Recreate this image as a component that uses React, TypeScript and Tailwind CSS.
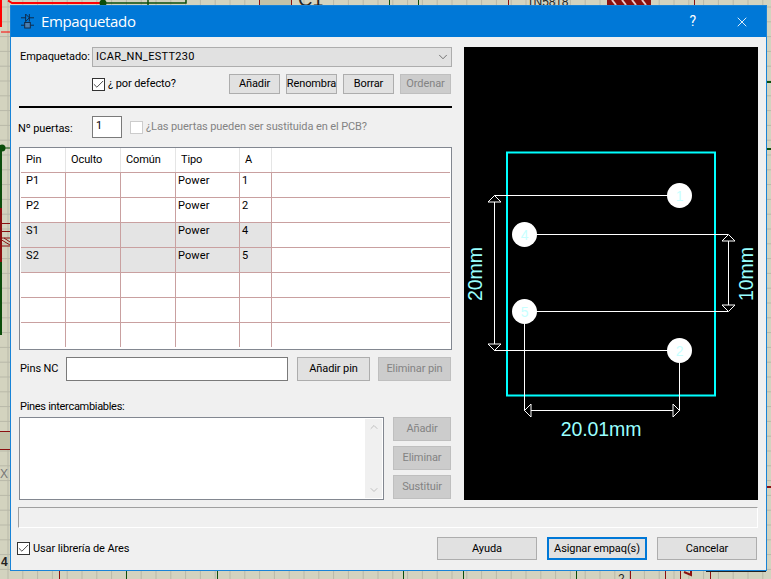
import { Check, ChevronDown, ChevronUp, X } from "lucide-react";

const columns = ["Pin", "Oculto", "Común", "Tipo", "A"];
const widths = ["w-[45px]", "w-[55px]", "w-[55px]", "w-[64px]", "w-[32px]"];

const rows = [
  { pin: "P1", tipo: "Power", a: "1", shaded: false },
  { pin: "P2", tipo: "Power", a: "2", shaded: false },
  { pin: "S1", tipo: "Power", a: "4", shaded: true },
  { pin: "S2", tipo: "Power", a: "5", shaded: true },
  { pin: "", tipo: "", a: "", shaded: false },
  { pin: "", tipo: "", a: "", shaded: false },
  { pin: "", tipo: "", a: "", shaded: false },
];

const Btn = ({ label, className = "", disabled = false }: { label: string; className?: string; disabled?: boolean }) => (
  <div
    className={`flex items-center justify-center overflow-hidden whitespace-nowrap border pt-[1px] ${
      disabled ? "bg-[#cccccc] border-[#bfbfbf] text-[#838383]" : "bg-[#e1e1e1] border-[#adadad] text-black"
    } ${className}`}
  >
    {label}
  </div>
);

const CheckBox = ({ checked = true, disabled = false }: { checked?: boolean; disabled?: boolean }) => (
  <div
    className={`flex h-[13px] w-[13px] shrink-0 items-center justify-center border bg-white ${
      disabled ? "border-[#cccccc]" : "border-[#333333]"
    }`}
  >
    {checked && <Check size={13} strokeWidth={1.6} className="shrink-0 text-[#333333]" />}
  </div>
);

// schematic sheet showing behind the dialog
const Sheet = () => (
  <svg className="absolute inset-0" width="771" height="579">
    <rect width="771" height="579" fill="#d3d3bf" />
    {Array.from({ length: 52 }).map((_, i) => (
      <line key={i} x1={8 + i * 14.8} y1="0" x2={8 + i * 14.8} y2="579" stroke="#b9b9a9" />
    ))}
    {Array.from({ length: 39 }).map((_, i) => (
      <line key={i} x1="0" y1={7 + i * 14.8} x2="771" y2={7 + i * 14.8} stroke="#b9b9a9" />
    ))}
    <path d="M1 0V27M8 0.5L12 3H103" stroke="#ff0000" strokeWidth="2" fill="none" />
    <path d="M1 32H10" stroke="#ff0000" fill="none" />
    <path d="M103 3H186V0M148 0V5" stroke="#0b4d0b" strokeWidth="1.5" fill="none" />
    <circle cx="103" cy="3" r="3.5" fill="#0b4d0b" />
    <rect x="259" y="0" width="33" height="5" fill="#c2c2a8" />
    <path d="M259.5 0V5M291.5 0V5M508.5 0V5M694.5 0V5" stroke="#8b1010" />
    <path d="M389.5 0V5M418.5 0V5" stroke="#0b4d0b" />
    <path d="M1 150V335" stroke="#0b4d0b" strokeWidth="2" />
    <circle cx="2" cy="148" r="3.5" fill="#0b4d0b" />
    <path d="M2 148H10" stroke="#0b4d0b" />
    <path d="M1 208V262" stroke="#8b1010" strokeWidth="2" />
    <path d="M0 223.5H10M0 231.5H10M0 238H10M0 246H10M0 431.5H10M0 449.5H10" stroke="#8b1010" />
    <path d="M0 239L10 245M4 238L10 242" stroke="#8b1010" />
    <rect x="0" y="432" width="10" height="17" fill="#c2c2a8" />
    <path d="M59.5 571V579M630.5 571V579M665.5 571V579M680.5 571V579M710.5 571V579" stroke="#8b1010" />
    <path d="M126.5 571V579M217.5 571V579M403.5 571V579M463.5 571V579M576.5 571V579" stroke="#0b4d0b" />
    <path d="M767 82H771M767 149H771" stroke="#0b4d0b" strokeWidth="2" />
    <path d="M767 487H771" stroke="#8b1010" strokeWidth="2" />
    <path d="M684 572L691 575V571" stroke="#8b1010" strokeWidth="2" fill="none" />
    <text x="298" y="6" fontFamily="Liberation Sans, sans-serif" fontSize="20" fill="#222222">C1</text>
    <text x="527" y="6" fontFamily="Liberation Sans, sans-serif" fontSize="12" fill="#222222">1N5818</text>
    <text x="618" y="583" fontFamily="Liberation Sans, sans-serif" fontSize="12" fill="#222222">2</text>
    <text x="0" y="478" fontFamily="Liberation Sans, sans-serif" fontSize="12" fill="#777777">X</text>
    <text x="1" y="566" fontFamily="Liberation Sans, sans-serif" fontSize="12" fontWeight="700" fill="#222222">4</text>
    <rect x="706" y="567" width="60" height="5" fill="#222222" />
    <path d="M607 0H651V5H607Z" fill="#8b1010" />
    <path d="M612 0L616 5M622 0L626 5M632 0L636 5M642 0L646 5" stroke="#e8c8c8" strokeWidth="2" />
  </svg>
);

const PadLabel = ({ x, y, n }: { x: number; y: number; n: string }) => (
  <>
    <circle cx={x} cy={y} r="12.5" fill="#ffffff" />
    <text x={x} y={y + 5} textAnchor="middle" fontFamily="Liberation Sans, sans-serif" fontSize="14" fill="#c8ffff">
      {n}
    </text>
  </>
);

// footprint preview with the pads and dimension arrows
const Preview = () => (
  <svg width="294" height="453" viewBox="464 47 294 453" className="block">
    <rect x="464" y="47" width="294" height="453" fill="#000000" />
    <rect x="507" y="152.5" width="208" height="243" fill="none" stroke="#00ffff" strokeWidth="2" />
    <g stroke="#ffffff" fill="none" shapeRendering="crispEdges">
      <path d="M494 195.5H680M494 350.5H680M524 234.5H728M524 311.5H728" />
      <path d="M494.5 196V350M728.5 235V311M524.5 311V411M679.5 350V411M525 410.5H679" />
    </g>
    <g stroke="#ffffff" fill="#000000">
      <path d="M494.5 195.5L488 202H501Z" />
      <path d="M494.5 350.5L488 344H501Z" />
      <path d="M728.5 234.5L722 241H735Z" />
      <path d="M728.5 311.5L722 305H735Z" />
      <path d="M524.5 410.5L531 404V417Z" />
      <path d="M679.5 410.5L673 404V417Z" />
    </g>
    <PadLabel x={679.5} y={195.5} n="1" />
    <PadLabel x={524.5} y={234.5} n="4" />
    <PadLabel x={524.5} y={311.5} n="5" />
    <PadLabel x={679.5} y={350.5} n="2" />
    <g fontFamily="Liberation Sans, sans-serif" fontSize="19.5" fill="#99ffff" textAnchor="middle">
      <text x="601" y="436">20.01mm</text>
      <text transform="translate(482 274) rotate(-90)">20mm</text>
      <text transform="translate(753 274) rotate(-90)">10mm</text>
    </g>
  </svg>
);

export default function App() {
  return (
    <div className="relative h-[579px] w-[771px] overflow-hidden font-['Roboto',sans-serif] text-[11px] tracking-[-0.1px] text-black">
      <Sheet />

      {/* Dialog */}
      <div className="absolute left-[10px] top-[5px] flex h-[566px] w-[757px] flex-col border border-[#1883d7] bg-[#f0f0f0]">
        <div className="flex h-[31px] shrink-0 items-center bg-[#0078d7] pl-[10px] text-white">
          <svg width="13" height="17" viewBox="0 0 14 18" fill="none" stroke="#10253f" strokeWidth="1">
            <path d="M0 5H5M9 5H14M5 1L9 5L5 9ZM9 1V9M0 13H4M10 13H14" />
            <rect x="4" y="10" width="6" height="6" fill="#4d7fb0" />
          </svg>
          <span className="ml-[7px] font-['Open_Sans',sans-serif] text-[15px] tracking-[-0.35px]">Empaquetado</span>
          <span className="ml-auto mr-[38px] text-[14px]">?</span>
          <X size={16} strokeWidth={1.3} className="mr-[16px]" />
        </div>

        <div className="flex flex-1 flex-col pl-[8px] pr-[8px]">
          <div className="flex pt-[10px]">
            {/* Left column */}
            <div className="w-[433px] shrink-0">
              <div className="flex h-[20px] items-center">
                <span className="ml-[1px] w-[72px]">Empaquetado:</span>
                <div className="flex h-full w-[360px] items-center justify-between border border-[#adadad] bg-[#e1e1e1] pl-[3px] pr-[1px]">
                  <span className="tracking-[0.3px]">ICAR_NN_ESTT230</span>
                  <ChevronDown size={14} strokeWidth={1.2} className="text-[#444444]" />
                </div>
              </div>

              <div className="mt-[7px] flex h-[20px]">
                <div className="ml-[73px] flex w-[137px] items-center gap-[3px]">
                  <CheckBox />
                  <span className="pt-[1px]">¿ por defecto?</span>
                </div>
                <Btn label="Añadir" className="w-[51px]" />
                <Btn label="Renombra" className="ml-[6px] w-[51px]" />
                <Btn label="Borrar" className="ml-[6px] w-[51px]" />
                <Btn label="Ordenar" disabled className="ml-[6px] w-[51px]" />
              </div>

              <div className="mt-[12px] h-[2px] bg-black" />

              <div className="mt-[8px] flex h-[22px] items-center">
                <span className="-ml-[1px] w-[74px] pt-[4px]">Nº puertas:</span>
                <div className="h-full w-[30px] border border-[#7a7a7a] bg-white pl-[3px] pt-[1px]">1</div>
                <div className="ml-[8px]">
                  <CheckBox checked={false} disabled />
                </div>
                <span className="ml-[3px] pt-[1px] text-[#838383]">¿Las puertas pueden ser sustituida en el PCB?</span>
              </div>

              {/* Pin table */}
              <div className="mt-[9px] h-[203px] border border-[#828790] bg-white p-[1px] pt-0">
                <div className="flex h-[24px] items-center">
                  {columns.map((c, i) => (
                    <div key={c} className={`flex h-full items-center border-r border-[#e5e5e5] pl-[5px] ${widths[i]}`}>
                      {c}
                    </div>
                  ))}
                </div>
                {rows.map((r, i) => (
                  <div key={i} className="flex h-[25px] border-t border-[#c9a0a0]">
                    {[r.pin, "", "", r.tipo, r.a].map((v, j) => (
                      <div
                        key={j}
                        className={`border-r border-[#c9a0a0] pt-[1px] leading-[14px] tracking-[0.1px] ${j === 0 ? "pl-[5px]" : "pl-[2px]"} ${widths[j]} ${
                          r.shaded ? "bg-[#e4e4e4]" : ""
                        }`}
                      >
                        {v}
                      </div>
                    ))}
                  </div>
                ))}
              </div>

              <div className="mt-[7px] flex h-[24px] items-center">
                <span className="ml-[1px] w-[46px] pt-[1px]">Pins NC</span>
                <div className="h-full w-[222px] border border-[#7a7a7a] bg-white" />
                <Btn label="Añadir pin" className="ml-[9px] h-full w-[73px]" />
                <Btn label="Eliminar pin" disabled className="ml-[8px] h-full w-[73px]" />
              </div>

              <div className="ml-[1px] mt-[19px] leading-[14px] tracking-[-0.3px]">Pines intercambiables:</div>

              <div className="mt-[3px] flex h-[83px]">
                <div className="flex w-[365px] justify-end border border-[#828790] bg-white p-[1px]">
                  <div className="flex w-[17px] flex-col items-center justify-between bg-[#f0f0f0] py-[2px]">
                    <ChevronUp size={12} strokeWidth={2} className="text-[#c0c0c0]" />
                    <ChevronDown size={12} strokeWidth={2} className="text-[#c0c0c0]" />
                  </div>
                </div>
                <div className="ml-[9px] flex w-[58px] flex-col gap-[5px]">
                  <Btn label="Añadir" disabled className="h-[24px]" />
                  <Btn label="Eliminar" disabled className="h-[24px]" />
                  <Btn label="Sustituir" disabled className="h-[24px]" />
                </div>
              </div>
            </div>

            {/* Preview */}
            <div className="ml-[12px] h-[453px] w-[294px] shrink-0 bg-black">
              <Preview />
            </div>
          </div>

          {/* Status strip */}
          <div className="-ml-[1px] mt-[7px] h-[21px] w-[740px] border border-[#a0a0a0] border-b-white border-r-white" />

          <div className="mt-[9px] flex h-[23px] items-center pr-[1px]">
            <div className="-ml-[2px] flex items-center gap-[3px]">
              <CheckBox />
              <span className="pt-[1px]">Usar librería de Ares</span>
            </div>
            <Btn label="Ayuda" className="ml-auto h-full w-[100px]" />
            <Btn label="Asignar empaq(s)" className="ml-[10px] h-full w-[100px] !border-2 !border-[#0078d7]" />
            <Btn label="Cancelar" className="ml-[10px] h-full w-[100px]" />
          </div>
        </div>
      </div>
    </div>
  );
}
